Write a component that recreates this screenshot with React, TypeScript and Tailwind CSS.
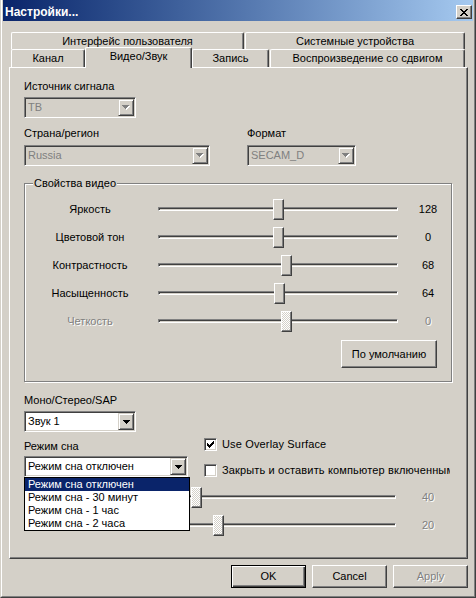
import React from "react";

type SliderSpec = {
  label: string;
  value: string;
  thumb: number;
  disabled?: boolean;
};

const videoSliders: SliderSpec[] = [
  { label: "Яркость", value: "128", thumb: 115 },
  { label: "Цветовой тон", value: "0", thumb: 115 },
  { label: "Контрастность", value: "68", thumb: 123 },
  { label: "Насыщенность", value: "64", thumb: 116 },
  { label: "Четкость", value: "0", thumb: 123, disabled: true },
];

// these two sit under the open dropdown, only their right half shows
const hiddenSliders: SliderSpec[] = [
  { label: "", value: "40", thumb: 33, disabled: true },
  { label: "", value: "20", thumb: 55, disabled: true },
];

const sleepOptions = [
  "Режим сна отключен",
  "Режим сна - 30 минут",
  "Режим сна - 1 час",
  "Режим сна - 2 часа",
];

const dis = "text-[#808080] [text-shadow:1px_1px_0_#fff]";
const raised =
  "border border-t-white border-l-white border-r-[#404040] border-b-[#404040] shadow-[inset_-1px_-1px_0_#808080]";
const sunken =
  "border border-t-[#808080] border-l-[#808080] border-r-white border-b-white shadow-[inset_1px_1px_0_#404040,inset_-1px_-1px_0_#d4d0c8]";

const closeGlyph = [
  "##....##",
  ".##..##.",
  "..####..",
  "...##...",
  "..####..",
  ".##..##.",
  "##....##",
];

const checkGlyph = [
  "......#",
  ".....##",
  "#...###",
  "##.###.",
  "#####..",
  ".###...",
  "..#....",
];

const arrowGlyph = ["#######", ".#####.", "..###..", "...#..."];

function Pixels({ rows, fill }: { rows: string[]; fill: string }) {
  return (
    <svg
      width={rows[0].length}
      height={rows.length}
      shapeRendering="crispEdges"
      className="block"
    >
      {rows.map((row, y) =>
        row
          .split("")
          .map((c, x) =>
            c === "#" ? (
              <rect key={`${x}-${y}`} x={x} y={y} width="1" height="1" fill={fill} />
            ) : null
          )
      )}
    </svg>
  );
}

function Combo({
  value,
  disabled,
  className,
}: {
  value: string;
  disabled?: boolean;
  className: string;
}) {
  return (
    <div
      className={`flex h-[21px] p-[1px] ${sunken} ${
        disabled ? "bg-[#d4d0c8]" : "bg-white"
      } ${className}`}
    >
      <div
        className={`flex-1 pl-[2px] flex items-center whitespace-nowrap overflow-hidden ${
          disabled ? "text-[#808080]" : ""
        }`}
      >
        {value}
      </div>
      <div className="w-[16px] h-[17px] flex items-center justify-center bg-[#d4d0c8] border border-t-[#d4d0c8] border-l-[#d4d0c8] border-r-[#404040] border-b-[#404040] shadow-[inset_1px_1px_0_#fff,inset_-1px_-1px_0_#808080]">
        {disabled ? (
          <div className="relative w-[8px] h-[5px]">
            <div className="absolute left-[1px] top-[1px]">
              <Pixels rows={arrowGlyph} fill="#fff" />
            </div>
            <div className="absolute left-0 top-0">
              <Pixels rows={arrowGlyph} fill="#808080" />
            </div>
          </div>
        ) : (
          <Pixels rows={arrowGlyph} fill="#000" />
        )}
      </div>
    </div>
  );
}

function Checkbox({ checked, label }: { checked?: boolean; label: string }) {
  return (
    <div className="flex h-[13px] items-center whitespace-nowrap">
      <div
        className={`w-[13px] h-[13px] shrink-0 bg-white flex items-center justify-center ${sunken}`}
      >
        {checked && <Pixels rows={checkGlyph} fill="#000" />}
      </div>
      <span className="ml-[5px] tracking-[0.15px]">{label}</span>
    </div>
  );
}

function SliderRow({
  s,
  labelClass,
  trackClass,
  valueClass,
}: {
  s: SliderSpec;
  labelClass: string;
  trackClass: string;
  valueClass: string;
}) {
  return (
    <div className="flex h-[28px] items-center">
      <div className={`${labelClass} text-center ${s.disabled ? dis : ""}`}>
        {s.label}
      </div>
      <div className={`relative h-full flex items-center ${trackClass}`}>
        <div className="h-[4px] w-full border border-t-[#808080] border-l-[#808080] border-r-white border-b-white shadow-[inset_1px_1px_0_#404040]" />
        <div
          className={`absolute top-[4px] w-[11px] h-[21px] ${raised} ${
            s.disabled
              ? "bg-[repeating-conic-gradient(#fff_0_25%,#d4d0c8_0_50%)] bg-size-[2px_2px]"
              : "bg-[#d4d0c8]"
          }`}
          style={{ left: s.thumb }}
        />
      </div>
      <div className={`${valueClass} w-[40px] text-center ${s.disabled ? dis : ""}`}>
        {s.value}
      </div>
    </div>
  );
}

const tabBase =
  "flex items-center justify-center bg-[#d4d0c8] border-l border-t border-l-white border-t-white border-r border-r-[#404040] shadow-[inset_-1px_0_0_#808080] rounded-t-[2px] whitespace-nowrap";

export default function App() {
  return (
    <div className="w-[476px] h-[598px] overflow-hidden bg-[#d4d0c8] text-[11px] leading-[13px] text-black font-['Liberation_Sans',Arial,sans-serif] border-l border-r border-b border-l-[#d4d0c8] border-r-[#404040] border-b-[#404040]">
      <div className="h-full border-l border-r border-b border-l-white border-r-[#808080] border-b-[#808080]">
        {/* caption bar */}
        <div className="mx-[1px] h-[21px] flex items-start justify-between bg-linear-to-r from-[#0a246a] to-[#a6caf0] pl-[2px] pr-[1px]">
          <span className="pt-[5px] text-[12px] leading-[14px] font-bold text-white">
            Настройки...
          </span>
          <div
            className={`mt-[5px] w-[16px] h-[14px] flex items-center justify-center bg-[#d4d0c8] ${raised}`}
          >
            <Pixels rows={closeGlyph} fill="#000" />
          </div>
        </div>

        <div className="pl-[7px] pr-[6px] pt-[11px]">
          {/* tabs, two rows */}
          <div className="ml-[2px]">
            <div className="flex h-[17px]">
              <div className={`${tabBase} w-[233px] h-[17px]`}>Интерфейс пользователя</div>
              <div className={`${tabBase} w-[220px] h-[17px] ml-[1px]`}>Системные устройства</div>
            </div>
            <div className="flex items-end h-[18px]">
              <div className={`${tabBase} w-[74px] h-[18px]`}>Канал</div>
              <div className={`${tabBase} relative z-10 w-[107px] h-[21px] mb-[-1px] pb-[3px]`}>
                Видео/Звук
              </div>
              <div className={`${tabBase} w-[77px] h-[18px]`}>Запись</div>
              <div className={`${tabBase} w-[195px] h-[18px] ml-[1px]`}>
                Воспроизведение со сдвигом
              </div>
            </div>
          </div>

          {/* page */}
          <div className="h-[492px] pl-[14px] pt-[12px] border border-t-white border-l-white border-r-[#404040] border-b-[#404040] shadow-[inset_-1px_-1px_0_#808080]">
            <div>Источник сигнала</div>
            <Combo className="mt-[4px] w-[112px]" value="ТВ" disabled />

            <div className="mt-[9px] flex">
              <div className="w-[223px]">
                <div>Страна/регион</div>
                <Combo className="mt-[5px] w-[186px]" value="Russia" disabled />
              </div>
              <div>
                <div>Формат</div>
                <Combo className="mt-[5px] w-[109px]" value="SECAM_D" disabled />
              </div>
            </div>

            <div className="relative mt-[17px] w-[428px] pt-[11px] pb-[13px] border border-[#808080] shadow-[inset_1px_1px_0_#fff,1px_1px_0_#fff]">
              <span className="absolute -top-[7px] left-[8px] px-[1px] bg-[#d4d0c8]">
                Свойства видео
              </span>
              {videoSliders.map((s) => (
                <SliderRow
                  key={s.label}
                  s={s}
                  labelClass="w-[130px]"
                  trackClass="ml-[3px] w-[240px]"
                  valueClass="ml-[10px]"
                />
              ))}
              <div className="mt-[5px] flex justify-end pr-[14px]">
                <div className={`w-[96px] h-[28px] flex items-center justify-center ${raised}`}>
                  По умолчанию
                </div>
              </div>
            </div>

            <div className="mt-[12px] flex">
              <div className="w-[180px]">
                <div>Моно/Стерео/SAP</div>
                <Combo className="mt-[4px] w-[112px]" value="Звук 1" />
                <div className="mt-[8px]">Режим сна</div>
                <div className="relative mt-[3px] w-[164px]">
                  <Combo className="w-[164px]" value="Режим сна отключен" />
                  <div className="absolute left-0 top-[21px] z-20 w-[166px] border border-black bg-white">
                    {sleepOptions.map((o, i) => (
                      <div
                        key={o}
                        className={`h-[13px] pl-[3px] whitespace-nowrap ${
                          i === 0 ? "bg-[#0a246a] text-white" : ""
                        }`}
                      >
                        {o}
                      </div>
                    ))}
                  </div>
                </div>
              </div>
              <div className="w-[246px] pt-[44px] overflow-hidden">
                <Checkbox checked label="Use Overlay Surface" />
                <div className="mt-[13px]">
                  <Checkbox label="Закрыть и оставить компьютер включенным" />
                </div>
              </div>
            </div>

            <div className="mt-[6px]">
              {hiddenSliders.map((s) => (
                <SliderRow
                  key={s.value}
                  s={s}
                  labelClass="w-[134px]"
                  trackClass="w-[238px]"
                  valueClass="ml-[12px]"
                />
              ))}
            </div>
          </div>

          {/* dialog buttons */}
          <div className="mt-[6px] flex justify-end gap-[6px]">
            <div className="w-[75px] h-[23px] flex items-center justify-center border border-black shadow-[inset_1px_1px_0_#fff,inset_-1px_-1px_0_#404040,inset_-2px_-2px_0_#808080]">
              OK
            </div>
            <div className={`w-[75px] h-[23px] flex items-center justify-center ${raised}`}>
              Cancel
            </div>
            <div className={`w-[75px] h-[23px] flex items-center justify-center ${raised} ${dis}`}>
              Apply
            </div>
          </div>
        </div>
      </div>
    </div>
  );
}
